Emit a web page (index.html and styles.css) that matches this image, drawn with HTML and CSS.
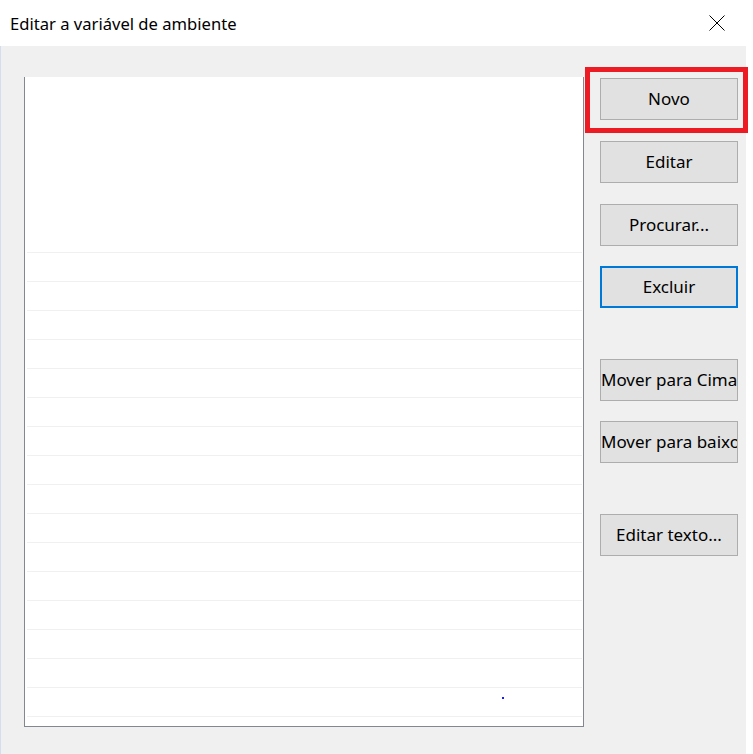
FILE: index.html
```html
<!DOCTYPE html>
<html lang="pt">
<head>
<meta charset="utf-8">
<title>Editar a variável de ambiente</title>
<link rel="stylesheet" href="styles.css">
</head>
<body>
<div class="window">
  <header class="titlebar">
    <span class="title">Editar a variável de ambiente</span>
    <svg class="close" width="16" height="16" viewBox="0 0 16 16" aria-hidden="true">
      <path d="M0.5 0.5 L15.5 15.5 M15.5 0.5 L0.5 15.5" stroke="#000" stroke-width="1" fill="none"/>
    </svg>
  </header>
  <main class="content">
    <div class="list">
      <div class="row"></div><div class="row"></div><div class="row"></div><div class="row"></div>
      <div class="row"></div><div class="row"></div><div class="row"></div><div class="row"></div>
      <div class="row"></div><div class="row"></div><div class="row"></div><div class="row"></div>
      <div class="row"></div><div class="row"></div><div class="row"></div><div class="row"></div>
      <div class="row"></div>
      <span class="dot"></span>
    </div>
    <div class="buttons">
      <div class="group group-main">
        <button class="btn btn-highlight">Novo<span class="mark"></span></button>
        <button class="btn">Editar</button>
        <button class="btn">Procurar...</button>
        <button class="btn btn-focus">Excluir</button>
      </div>
      <div class="group">
        <button class="btn">Mover para Cima</button>
        <button class="btn">Mover para baixo</button>
      </div>
      <div class="group">
        <button class="btn">Editar texto...</button>
      </div>
    </div>
  </main>
</div>
</body>
</html>
```

FILE: styles.css
```css
html, body {
  margin: 0;
  padding: 0;
  background: #ffffff;
}

body {
  font-family: "Noto Sans", "Open Sans", sans-serif;
  color: #000;
  width: 753px;
  height: 754px;
  overflow: hidden;
}

.window {
  width: 746px;
  height: 754px;
  display: flex;
  flex-direction: column;
}

.titlebar {
  height: 46px;
  flex: none;
  display: flex;
  align-items: center;
  justify-content: space-between;
  padding: 0 21px 0 10px;
  background: #ffffff;
  box-sizing: border-box;
}

.title {
  font-size: 16.6px;
  line-height: 20px;
  margin-top: 2px;
}

.close {
  display: block;
  margin-top: 0;
}

.content {
  flex: 1;
  background: #f0f0f0;
  border-left: 1px solid #d4def0;
  display: flex;
  align-items: flex-start;
  padding: 31px 0 0 23px;
}

.list {
  position: relative;
  width: 556px;
  background: #ffffff;
  border: 1px solid #828790;
  border-top: none;
  padding: 147px 1px 0 1px;
  box-sizing: content-box;
  height: 502px;
  overflow: hidden;
}

.row {
  height: 28px;
  border-bottom: 1px solid #f0f0f0;
  margin-left: 1px;
}

.dot {
  position: absolute;
  left: 477px;
  top: 620px;
  width: 2px;
  height: 2px;
  background: #1a1aff;
}

.buttons {
  margin-left: 16px;
  padding-top: 1px;
  display: flex;
  flex-direction: column;
  gap: 51px;
}

.group {
  display: flex;
  flex-direction: column;
  gap: 20px;
}

.group-main {
  gap: 20.8px;
}

.btn {
  position: relative;
  width: 138px;
  height: 42px;
  padding: 0;
  margin: 0;
  background: #e1e1e1;
  border: 1px solid #adadad;
  font-family: "Noto Sans", "Open Sans", sans-serif;
  font-size: 17px;
  line-height: 38px;
  color: #000;
  text-align: center;
  white-space: nowrap;
  overflow: hidden;
  box-sizing: border-box;
}

.btn-highlight {
  overflow: visible;
}

.btn-focus {
  border: 2px solid #0078d7;
}

.mark {
  position: absolute;
  left: -16px;
  top: -12px;
  width: 163px;
  height: 66px;
  border: 5px solid #ed1c24;
  box-sizing: border-box;
  pointer-events: none;
}
```
